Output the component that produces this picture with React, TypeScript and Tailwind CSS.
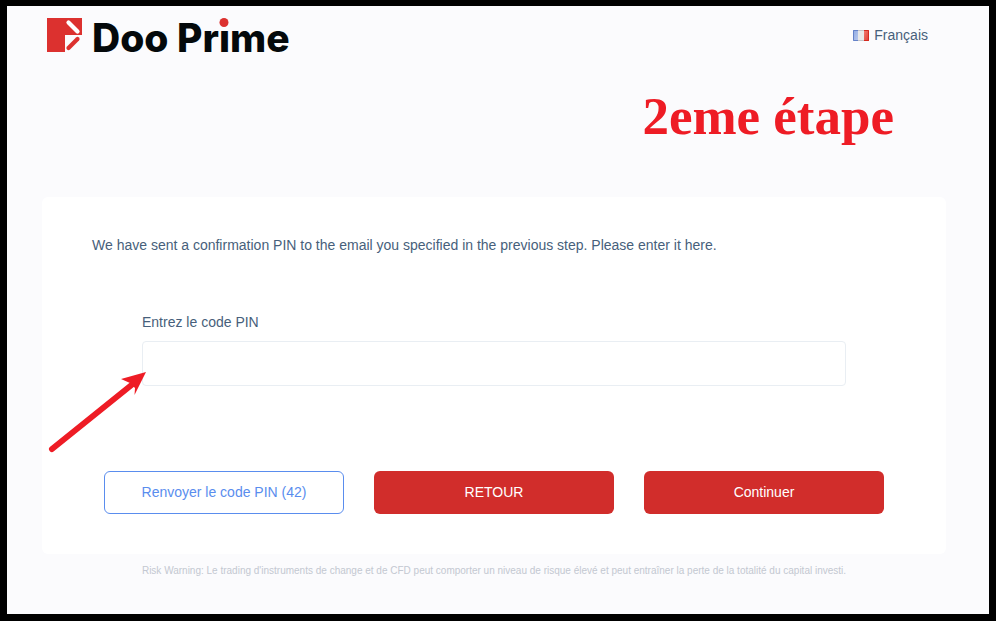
import React, { useState } from 'react';

const Logo = () => (
  <a href="#" aria-label="Doo Prime" className="flex items-start gap-[10px]">
    <svg className="h-[34px] w-[35px]" viewBox="0 0 35 34" fill="none" aria-hidden="true">
      <path d="M0 0H35V17H18V34H0Z" fill="#dc312f" />
      <path d="M21.5 4.5L30.5 13.5" stroke="#fff" strokeWidth="4.2" strokeLinecap="round" />
      <path d="M30.5 21L21.5 30" stroke="#dc312f" strokeWidth="4.2" strokeLinecap="round" />
    </svg>
    <span className="font-[Inter] text-[39px] leading-[40px] font-extrabold text-[#04090b]">
      Doo Pr
      <span className="relative">
        ı
        <span className="absolute top-1 left-1/2 size-[9px] -translate-x-1/2 rounded-full bg-[#dc312f]" />
      </span>
      me
    </span>
  </a>
);

const FrenchFlag = () => (
  <svg className="h-[11px] w-4" viewBox="0 0 16 11" aria-hidden="true">
    <defs>
      <linearGradient id="flag-blue" x1="0" x2="1" y1="0" y2="1">
        <stop offset="0" stopColor="#8fa9e2" />
        <stop offset="1" stopColor="#b8c8ec" />
      </linearGradient>
      <linearGradient id="flag-red" x1="0" x2="1" y1="0" y2="1">
        <stop offset="0" stopColor="#f07b70" />
        <stop offset="1" stopColor="#e03a30" />
      </linearGradient>
    </defs>
    <rect width="16" height="11" fill="#e8e8e8" />
    <rect width="5" height="11" fill="url(#flag-blue)" />
    <rect x="11" width="5" height="11" fill="url(#flag-red)" />
    <path d="M5 .5H.5V10.5H5" fill="none" stroke="#6582c8" />
    <path d="M5 .5H11M5 10.5H11" stroke="#c4c4c8" />
    <path d="M11 .5H15.5V10.5H11" fill="none" stroke="#d3291f" />
  </svg>
);

const App = () => {
  const [pin, setPin] = useState('');

  return (
    <div className="min-h-screen border-[7px] border-t-[6px] border-black bg-[#fbfbfd] pr-[43px] pl-[35px] font-['Liberation_Sans',Arial,sans-serif] text-sm text-[#475f7b]">
      <header className="flex items-start justify-between px-[5px] pt-3">
        <Logo />
        <button type="button" className="mt-[7px] mr-[13px] flex items-center gap-[5px]">
          <FrenchFlag />
          <span>Français</span>
        </button>
      </header>

      <h1 className="mt-7 mr-[52px] text-right font-['Liberation_Serif',serif] text-[53px] leading-[60px] font-bold text-[#ee1c25]">
        2eme étape
      </h1>

      <main className="mt-[51px] rounded-md bg-white pt-[38px] pb-10">
        <p className="px-[50px]">
          We have sent a confirmation PIN to the email you specified in the previous step. Please enter it here.
        </p>

        <form onSubmit={(e) => e.preventDefault()}>
          <div className="mt-[57px] px-[100px]">
            <label htmlFor="pin" className="block">Entrez le code PIN</label>
            <div className="relative mt-[9px]">
              <input
                id="pin"
                type="text"
                value={pin}
                onChange={(e) => setPin(e.target.value)}
                className="block h-[45px] w-full rounded border border-[#e9eef3] bg-white px-3 outline-none"
              />
              {/* Arrow pointing at the PIN field */}
              <svg
                className="pointer-events-none absolute top-[30px] -left-24 h-[84px] w-[102px]"
                viewBox="0 0 102 84"
                aria-hidden="true"
              >
                <path d="M6 78L88 12" stroke="#ee1c25" strokeWidth="6" strokeLinecap="round" />
                <path d="M100 1L75 8L84 12L89 17L88.5 24Z" fill="#ee1c25" />
              </svg>
            </div>
          </div>

          <div className="mt-[85px] grid grid-cols-3 gap-[30px] px-[62px]">
            <button type="button" className="h-[43px] rounded-md border border-[#5a8dee] pb-0.5 text-[#5a8dee]">
              Renvoyer le code PIN (42)
            </button>
            <button type="button" className="h-[43px] rounded-md bg-[#d12d2b] pb-0.5 text-white">
              RETOUR
            </button>
            <button type="submit" className="h-[43px] rounded-md bg-[#d12d2b] pb-0.5 text-white">
              Continuer
            </button>
          </div>
        </form>
      </main>

      <footer className="mt-[9px] text-center text-[10px] leading-4 text-[#c3c8d1]">
        Risk Warning: Le trading d'instruments de change et de CFD peut comporter un niveau de risque élevé et peut entraîner la perte de la totalité du capital investi.
      </footer>
    </div>
  );
};

export default App;
